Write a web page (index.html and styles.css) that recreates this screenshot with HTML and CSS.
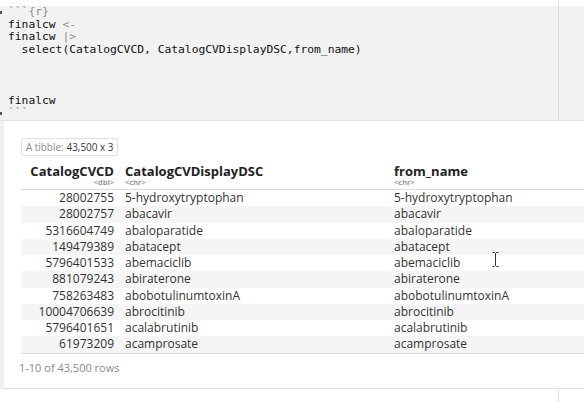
FILE: index.html
```html
<!DOCTYPE html>
<html>
<head>
<meta charset="utf-8">
<link rel="stylesheet" href="styles.css">
</head>
<body>
<div class="page">
  <div class="topstrip"></div>
  <div class="chunk">
    <div class="line"><span class="fold"></span><span class="op">```{r}</span></div>
    <div class="line">finalcw <span class="op">&lt;-</span></div>
    <div class="line">finalcw <span class="op">|&gt;</span></div>
    <div class="line">  select(CatalogCVCD, CatalogCVDisplayDSC,from_name)</div>
    <div class="line"> </div>
    <div class="line"> </div>
    <div class="line"> </div>
    <div class="line">finalcw</div>
    <div class="line"><span class="fold"></span><span class="op">```</span></div>
  </div>
  <div class="outwrap">
    <div class="output">
      <div class="tibble"><span class="muted">A tibble:</span> 43,500 x 3</div>
      <table class="tbl">
        <colgroup><col class="c1"><col class="c2"><col class="c3"></colgroup>
        <thead>
          <tr>
            <th class="num"><div class="name">CatalogCVCD</div><div class="type">&lt;dbl&gt;</div></th>
            <th><div class="name">CatalogCVDisplayDSC</div><div class="type">&lt;chr&gt;</div></th>
            <th><div class="name">from_name</div><div class="type">&lt;chr&gt;</div></th>
          </tr>
        </thead>
        <tbody>
          <tr><td class="num">28002755</td><td>5-hydroxytryptophan</td><td>5-hydroxytryptophan</td></tr>
          <tr><td class="num">28002757</td><td>abacavir</td><td>abacavir</td></tr>
          <tr><td class="num">5316604749</td><td>abaloparatide</td><td>abaloparatide</td></tr>
          <tr><td class="num">149479389</td><td>abatacept</td><td>abatacept</td></tr>
          <tr><td class="num">5796401533</td><td>abemaciclib</td><td>abemaciclib</td></tr>
          <tr><td class="num">881079243</td><td>abiraterone</td><td>abiraterone</td></tr>
          <tr><td class="num">758263483</td><td>abobotulinumtoxinA</td><td>abobotulinumtoxinA</td></tr>
          <tr><td class="num">10004706639</td><td>abrocitinib</td><td>abrocitinib</td></tr>
          <tr><td class="num">5796401651</td><td>acalabrutinib</td><td>acalabrutinib</td></tr>
          <tr><td class="num">61973209</td><td>acamprosate</td><td>acamprosate</td></tr>
        </tbody>
      </table>
      <div class="footer">1-10 of 43,500 rows</div>
    </div>
  </div>
  <div class="after"></div>
  <svg class="ibeam" width="9" height="17" viewBox="0 0 9 17">
    <path d="M1.5 1.5h2l1 1 1-1h2M4.5 2.5v12M1.5 15.5h2l1-1 1 1h2" fill="none" stroke="#fff" stroke-width="2.4"/>
    <path d="M1.5 1.5h2l1 1 1-1h2M4.5 2.5v12M1.5 15.5h2l1-1 1 1h2" fill="none" stroke="#333" stroke-width="1"/>
  </svg>
</div>
</body>
</html>
```

FILE: styles.css
```css
* { box-sizing: border-box; }
html, body { margin: 0; padding: 0; background: #fff; }
body { font-family: "Open Sans", "DejaVu Sans", sans-serif; color: #333; }

.page { position: relative; width: 584px; height: 402px; overflow: hidden; display: flex; flex-direction: column; }

.topstrip {
  height: 6px;
  background: linear-gradient(to right, transparent 558px, #dedede 558px, #dedede 559px, transparent 559px), #fff;
}

.chunk {
  height: 115px;
  background: linear-gradient(to right, transparent 558px, #dcdcdc 558px, #dcdcdc 559px, transparent 559px), #f2f2f2;
  border-bottom: 1px solid #e2e2e2;
  padding-left: 8px;
  font-family: "DejaVu Sans Mono", "Liberation Mono", monospace;
  font-size: 11.3px;
  line-height: 12.67px;
  color: #111;
}
.line { white-space: pre; height: 12.67px; position: relative; }
.op { color: #8c8c8c; }
.fold { position: absolute; left: -8px; top: 5px; width: 2px; height: 3px; background: #555; }

.outwrap { background: #efefef; padding-left: 4px; }
.output {
  background: #fff;
  height: 268px;
  border-bottom: 1px solid #dcdcdc;
  padding: 17px 0 0 17px;
}

.tibble {
  display: flex;
  width: fit-content;
  align-items: center;
  height: 18px;
  padding: 0 4px;
  border: 1px solid #e0e0e0;
  border-radius: 3px;
  font-size: 9.9px;
  color: #333;
}
.muted { color: #8a8a8a; margin-right: 3px; }

.tbl {
  width: 563px;
  table-layout: fixed;
  border-collapse: collapse;
  font-size: 12px;
}
.c1 { width: 99px; }
.c2 { width: 269px; }
.tbl th { text-align: left; vertical-align: bottom; padding: 8px 0 2px 5px; border-bottom: 1px solid #dcdcdc; }
.tbl th.num { text-align: right; padding: 8px 6px 2px 0; }
.name { font-weight: 700; font-size: 13px; line-height: 14px; color: #222; }
.type { font-size: 7.5px; line-height: 9px; color: #9a9a9a; }
.tbl td { padding: 0 0 0 5px; height: 16.25px; line-height: 16.25px; white-space: nowrap; color: #333; }
.tbl td.num { text-align: right; padding: 0 6px 0 0; }
.tbl tbody tr:nth-child(even) td { background: #f5f5f5; }
.tbl tbody tr:last-child td { border-bottom: 1px solid #dcdcdc; }

.footer { margin: 7px 0 0 -2px; font-size: 11px; line-height: 14px; color: #8a8a8a; }

.after {
  flex: 1;
  background: linear-gradient(to right, transparent 558px, #dedede 558px, #dedede 559px, transparent 559px), #fff;
}

.ibeam { position: absolute; left: 491px; top: 251px; }
```
